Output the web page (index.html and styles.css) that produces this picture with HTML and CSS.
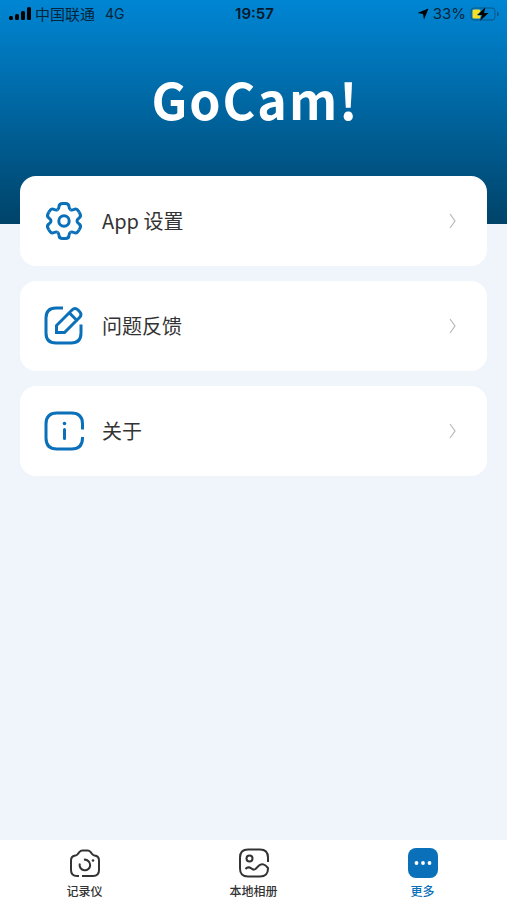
FILE: index.html
```
<!DOCTYPE html>
<html lang="zh-CN">
<head>
<meta charset="utf-8">
<meta name="viewport" content="width=device-width, initial-scale=1">
<title>GoCam!</title>
<link rel="stylesheet" href="styles.css">
</head>
<body>
<header class="hero">
  <div class="status">
    <div class="status-side">
      <svg class="signal" width="22" height="14" viewBox="0 0 22 14" aria-hidden="true">
        <rect x="0" y="9" width="4" height="4" rx="1.500"/>
        <rect x="6" y="7" width="4" height="6" rx="1.500"/>
        <rect x="12" y="4" width="4" height="9" rx="1.500"/>
        <rect x="18" y="0" width="4" height="13" rx="1.500"/>
      </svg>
      <span class="carrier">中国联通</span>
      <span class="network">4G</span>
    </div>
    <time class="clock">19:57</time>
    <div class="status-side status-end">
      <svg width="12" height="12" viewBox="0 0 12 12" aria-hidden="true"><path d="M11.500.5 7 11.500 6 6 .5 5Z"/></svg>
      <span class="percent">33%</span>
      <svg width="30" height="16" viewBox="0 0 30 16" aria-hidden="true">
        <rect x="1" y="2" width="24" height="12" rx="3" fill="none" stroke="#07568a"/>
        <path d="M27 5.500Q29 6.500 29 8T27 10.500Z" fill="#07568a"/>
        <rect x="2.500" y="3.500" width="8" height="9" rx="1.500" fill="#f8df25"/>
        <path d="M15.500 1 7.500 9H12L10 15 18.500 7H14Z" stroke="#0781c9" stroke-width="1" paint-order="stroke"/>
      </svg>
    </div>
  </div>
  <h1 class="brand">GoCam!</h1>
</header>

<main class="menu">
  <a class="card" href="#settings">
    <svg class="icon" viewBox="-20 -20 40 40" aria-hidden="true">
      <defs>
        <path id="half" d="M0-17.500H1.500Q4.800-17.500 5-14.300C5.100-12.600 5.400-11.900 6.500-11.260"/>
        <g id="tooth"><use href="#half"/><use href="#half" transform="scale(-1 1)"/></g>
      </defs>
      <use href="#tooth"/>
      <use href="#tooth" transform="rotate(60)"/>
      <use href="#tooth" transform="rotate(120)"/>
      <use href="#tooth" transform="rotate(180)"/>
      <use href="#tooth" transform="rotate(240)"/>
      <use href="#tooth" transform="rotate(300)"/>
      <circle r="5.200"/>
    </svg>
    <span class="label">App 设置</span>
    <svg class="chevron" viewBox="0 0 8 16" aria-hidden="true"><path d="M1 1 6 8 1 15"/></svg>
  </a>
  <a class="card" href="#feedback">
    <svg class="icon" viewBox="0 0 40 40" aria-hidden="true">
      <path d="M19 2H12Q2 2 2 12V27Q2 37 12 37H27Q37 37 37 27V18.500"/>
      <path d="M12.500 26.500V19.500L28 4Q31 1 34 4L35.500 5.500Q38.500 8.500 35.500 11.500L20.500 26.500ZM25 6.500 32.500 14"/>
    </svg>
    <span class="label">问题反馈</span>
    <svg class="chevron" viewBox="0 0 8 16" aria-hidden="true"><path d="M1 1 6 8 1 15"/></svg>
  </a>
  <a class="card" href="#about">
    <svg class="icon" viewBox="0 0 40 40" aria-hidden="true">
      <path d="M38.500 18.500V13Q38.500 2 27.500 2H13Q2 2 2 13V27Q2 38 13 38H27.500Q38.500 38 38.500 27V26"/>
      <path d="M20.500 18.500V27.500" stroke-linecap="round"/>
      <circle class="dot" cx="20.500" cy="12.500" r="1.800"/>
    </svg>
    <span class="label">关于</span>
    <svg class="chevron" viewBox="0 0 8 16" aria-hidden="true"><path d="M1 1 6 8 1 15"/></svg>
  </a>
</main>

<nav class="tabs">
  <a class="tab" href="#recorder">
    <svg class="tab-icon" viewBox="0 0 32 30" aria-hidden="true">
      <path d="M10 28H8Q2 28 2 22V12.500Q2 8 6.500 7.500Q8 7.300 8.800 6L10.500 4Q11.500 2.500 13.500 2.500H18.500Q20.500 2.500 21.500 4L23.200 6Q24 7.300 25.500 7.500Q30 8 30 12.500V22Q30 28 24 28H13"/>
      <path d="M15 11.800A5.300 5.300 0 1 1 10.800 15.500M15 11.800Q18 11 20 14"/>
      <circle class="dot" cx="24" cy="12.500" r="1.300"/>
    </svg>
    <span>记录仪</span>
  </a>
  <a class="tab" href="#album">
    <svg class="tab-icon" viewBox="0 0 32 30" aria-hidden="true">
      <path d="M30 14V9.500Q30 1.500 22 1.500H10Q2 1.500 2 9.500V20.500Q2 28.500 10 28.500H22Q30 28.500 30 20.500V20Q25 14 21 17.500L17.500 21Q15.500 22.500 13.500 20.500Q10 18 7.500 21"/>
      <circle cx="11.500" cy="10.500" r="3"/>
    </svg>
    <span>本地相册</span>
  </a>
  <a class="tab tab-active" href="#more" aria-current="page">
    <svg class="tab-icon" viewBox="0 0 32 30" aria-hidden="true">
      <rect class="tile" x="1" y="0" width="30" height="30" rx="8"/>
      <circle class="hole" cx="9.500" cy="15" r="1.900"/>
      <circle class="hole" cx="16" cy="15" r="1.900"/>
      <circle class="hole" cx="22.500" cy="15" r="1.900"/>
    </svg>
    <span>更多</span>
  </a>
</nav>
</body>
</html>
```

FILE: styles.css
```
* {
  box-sizing: border-box;
}

body {
  margin: 0;
  min-height: 100vh;
  display: flex;
  flex-direction: column;
  background: #f0f4fb;
  color: #333;
  font-family: "Noto Sans CJK SC", sans-serif;
}

a {
  color: inherit;
  text-decoration: none;
}

.hero {
  height: 224px;
  background: linear-gradient(#0086d4, #004369);
}

.status {
  display: grid;
  grid-template-columns: 1fr auto 1fr;
  align-items: center;
  height: 28px;
  padding: 0 7px 0 9px;
  color: #06243a;
  font-size: 15px;
  line-height: 28px;
}

.status-side {
  display: flex;
  align-items: center;
  gap: 4px;
}

.status-end {
  justify-content: flex-end;
}

.network,
.percent,
.clock {
  font-family: Inter, sans-serif;
}

.network {
  margin-left: 6px;
  font-size: 14px;
}

.clock {
  color: #04182a;
  font-weight: 600;
}

.brand {
  margin: 34px 0 0;
  padding-left: 4px;
  color: #fff;
  font-size: 50px;
  font-weight: 700;
  line-height: 72px;
  letter-spacing: 2px;
  text-align: center;
}

.menu {
  flex: 1;
  display: flex;
  flex-direction: column;
  gap: 15px;
  margin-top: -48px;
  padding: 0 20px 24px;
}

.card {
  display: flex;
  align-items: center;
  height: 90px;
  padding: 0 30px 0 24px;
  border-radius: 16px;
  background: #fff;
}

.icon {
  width: 40px;
  height: 40px;
  fill: none;
  stroke: #0970b9;
  stroke-width: 3;
}

.icon .dot {
  fill: #0970b9;
  stroke: none;
}

.label {
  flex: 1;
  margin-left: 18px;
  font-size: 20px;
  line-height: 30px;
}

.chevron {
  width: 8px;
  height: 16px;
  fill: none;
  stroke: #b8b8b8;
  stroke-width: 1.2;
}

.tabs {
  display: grid;
  grid-template-columns: repeat(3, 1fr);
  height: 60px;
  background: #fff;
}

.tab {
  display: flex;
  flex-direction: column;
  align-items: center;
  gap: 4px;
  padding-top: 8px;
  font-size: 12px;
  font-weight: 500;
  line-height: 18px;
}

.tab-icon {
  width: 32px;
  height: 30px;
  fill: none;
  stroke: #333;
  stroke-width: 2;
}

.tab-icon .dot {
  fill: #333;
  stroke: none;
}

.tab-icon .tile {
  fill: #0970b9;
  stroke: none;
}

.tab-icon .hole {
  fill: #fff;
  stroke: none;
}

.tab-active {
  color: #0970b9;
}
```
